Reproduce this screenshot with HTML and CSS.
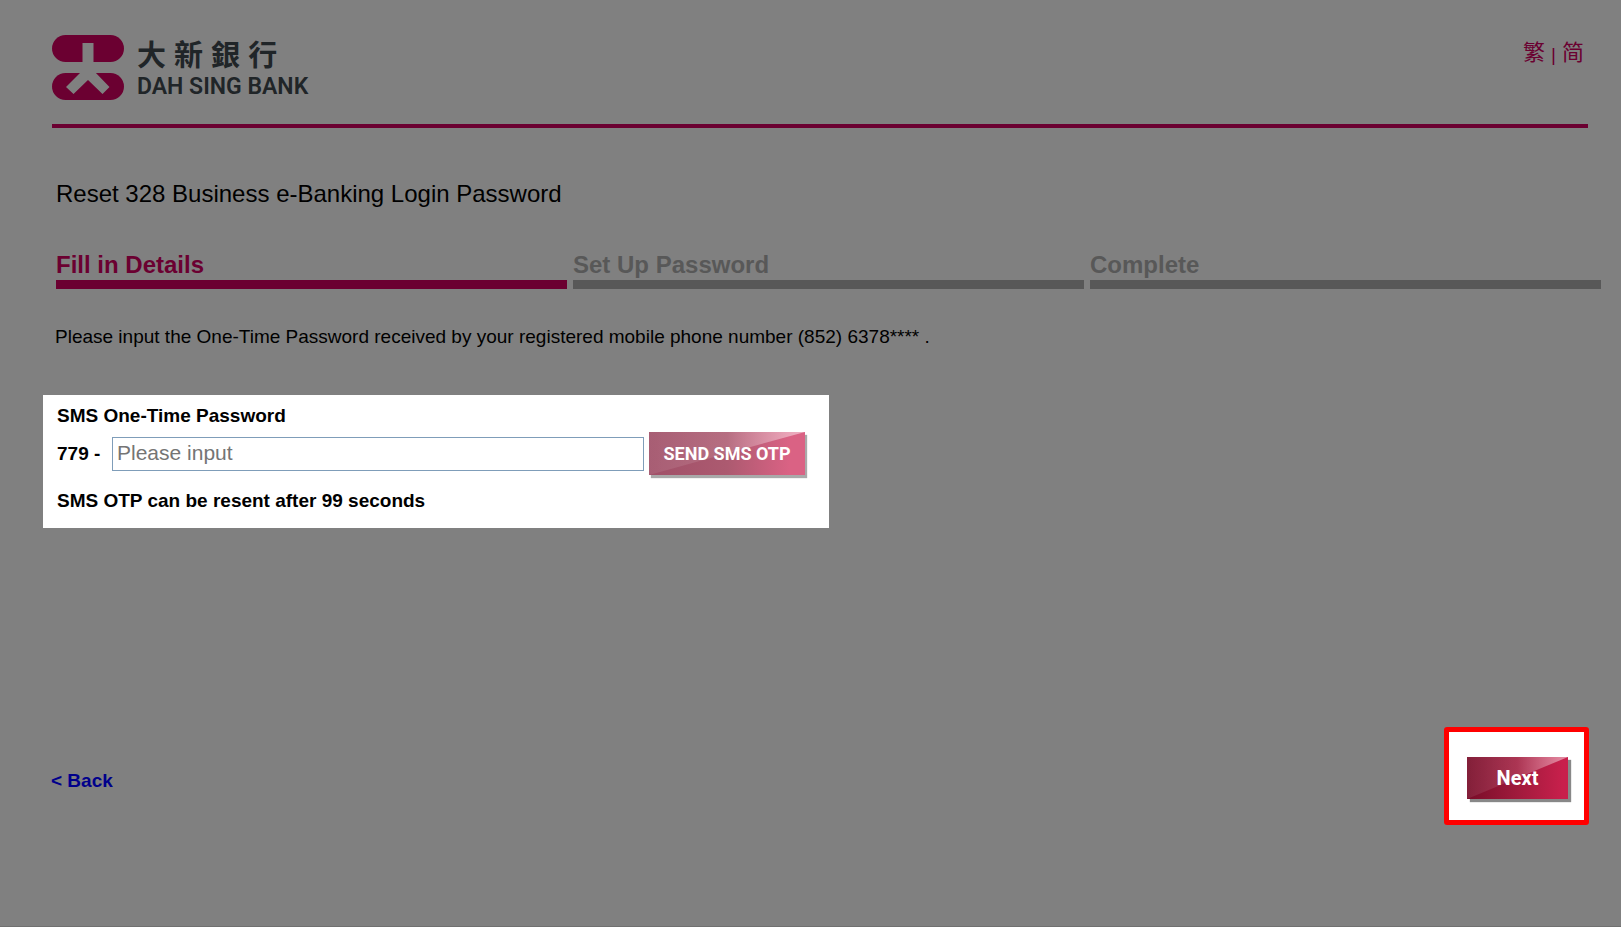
FILE: index.html
```html
<!DOCTYPE html>
<html lang="en">

<head>
    <meta charset="UTF-8">
    <meta name="viewport" content="width=device-width, initial-scale=1.0">
    <title>Reset 328 Business e-Banking Login Password</title>
    <link rel="stylesheet" href="styles.css">
</head>

<body>
    <header class="header">
        <div class="logo">
            <svg class="logo-mark" viewBox="0 0 72 65" aria-hidden="true">
                <rect x="0" y="0" width="72" height="27" rx="13.5" />
                <rect x="0" y="38" width="72" height="27" rx="13.5" />
                <path class="logo-figure" d="M30.500 8H41.500V35.500L57.500 52L50.500 59L36 45L21.500 59L14 52L30.500 35.500Z" />
            </svg>
            <div class="logo-text">
                <span class="logo-zh" lang="zh-Hant">大 新 銀 行</span>
                <span class="logo-en">DAH SING BANK</span>
            </div>
        </div>
        <nav class="languages">
            <a href="#" lang="zh-Hant">繁</a>
            <span class="divider">|</span>
            <a href="#" lang="zh-Hans">简</a>
        </nav>
    </header>

    <main>
        <h1>Reset 328 Business e-Banking Login Password</h1>

        <!-- Progress -->
        <ol class="steps">
            <li class="step active">Fill in Details</li>
            <li class="step">Set Up Password</li>
            <li class="step">Complete</li>
        </ol>

        <p class="intro">Please input the One-Time Password received by your registered mobile phone number (852) 6378**** .</p>

        <!-- One-time password -->
        <form class="otp-box">
            <label for="otp">SMS One-Time Password</label>
            <div class="otp-row">
                <span class="otp-prefix">779 -</span>
                <input type="text" id="otp" class="otp-input" placeholder="Please input">
                <button type="button" class="button send-button">SEND SMS OTP</button>
            </div>
            <p class="otp-status">SMS OTP can be resent after 99 seconds</p>
        </form>
    </main>

    <footer class="actions">
        <a href="#" class="back">&lt; Back</a>
        <div class="next-box">
            <button type="button" class="button next-button">Next</button>
        </div>
    </footer>
</body>

</html>
```

FILE: styles.css
```css
* {
    box-sizing: border-box;
}

body {
    min-height: 100vh;
    margin: 0;
    background-color: #808080;
    border-bottom: 1px solid #707070;
    color: #000000;
    font-family: "Liberation Sans", Arial, sans-serif;
    font-size: 19px;
    line-height: 24px;
}

/* Header */
.header {
    display: flex;
    justify-content: space-between;
    margin: 0 33px 0 52px;
    padding: 35px 0 22px;
    border-bottom: 4px solid #6b0031;
}

.logo {
    display: flex;
    gap: 13px;
}

.logo-mark {
    width: 72px;
    height: 65px;
    fill: #6b0031;
}

.logo-figure {
    fill: #808080;
}

.logo-text {
    display: flex;
    flex-direction: column;
    padding-top: 5px;
    color: #202528;
}

.logo-zh {
    font-family: "Liberation Sans", "Noto Sans CJK TC", sans-serif;
    font-size: 29px;
    font-weight: 700;
    line-height: 32px;
}

.logo-en {
    font-family: Roboto, sans-serif;
    font-size: 23px;
    font-weight: 600;
    line-height: 30px;
}

.languages {
    display: flex;
    gap: 6px;
    padding: 6px 4px 0 0;
    color: #6b0031;
    font-family: "Liberation Sans", "Noto Sans CJK TC", sans-serif;
    font-size: 22px;
}

.languages a {
    color: #6b0031;
    text-decoration: none;
}

.divider {
    font-size: 19px;
    line-height: 28px;
}

/* Title and progress */
h1 {
    margin: 52px 20px 0 56px;
    font-size: 24px;
    font-weight: 400;
    line-height: 28px;
}

.steps {
    display: flex;
    gap: 6px;
    margin: 43px 20px 0 56px;
    padding: 0;
    list-style: none;
}

.step {
    flex: 1;
    padding-bottom: 1px;
    border-bottom: 9px solid #585858;
    color: #585858;
    font-size: 24px;
    font-weight: 700;
    line-height: 28px;
}

.step.active {
    border-color: #6b0031;
    color: #6b0031;
}

.intro {
    margin: 36px 20px 0 55px;
}

/* One-time password */
.otp-box {
    width: 786px;
    max-width: 92%;
    margin: 46px 0 0 43px;
    padding: 9px 22px 15px 14px;
    background-color: #ffffff;
    font-weight: 700;
}

.otp-box label {
    display: block;
}

.otp-row {
    display: flex;
    align-items: center;
    margin-top: 4px;
}

.otp-prefix {
    flex: none;
    width: 55px;
}

.otp-input {
    flex: 1;
    min-width: 0;
    height: 34px;
    margin-right: 5px;
    padding: 0 4px 2px;
    border: 1px solid #7f9db9;
    border-radius: 0;
    background-color: #ffffff;
    font-family: inherit;
    font-size: 21px;
}

.otp-input::placeholder {
    color: #757575;
}

.otp-status {
    margin: 14px 0 0;
}

/* Glossy buttons */
.button {
    position: relative;
    isolation: isolate;
    flex: none;
    padding: 0;
    border: 0;
    color: #ffffff;
    font-family: Roboto, sans-serif;
    font-size: 18px;
    font-weight: 700;
    cursor: pointer;
}

/* Light band above the diagonal */
.button::before {
    content: "";
    position: absolute;
    inset: 0;
    z-index: -1;
    background: linear-gradient(to right, rgba(255, 255, 255, 0.08), rgba(255, 255, 255, 0.12) 50%, rgba(255, 255, 255, 0.5));
    clip-path: polygon(0 0, 100% 0, 0 100%);
}

.send-button {
    width: 156px;
    height: 43px;
    margin-right: 2px;
    background: linear-gradient(to right, #a05068, #ac5a70 50%, #da6284 90%);
    box-shadow: 2px 3px 1px #a9a9a9;
}

.next-button {
    width: 101px;
    height: 42px;
    background: linear-gradient(to right, #780c28, #a01a3c 50%, #c8204c 95%);
    box-shadow: 3px 3px 1px #888888;
    font-size: 20px;
}

/* Footer */
.actions {
    display: flex;
    align-items: center;
    justify-content: space-between;
    margin: 199px 32px 0 51px;
}

.back {
    padding-top: 9px;
    color: #00008b;
    font-weight: 700;
    text-decoration: none;
}

.next-box {
    padding: 25px 16px 21px 18px;
    border: 5px solid #ff0000;
    border-radius: 3px;
    background-color: #ffffff;
    line-height: 0;
}
```
